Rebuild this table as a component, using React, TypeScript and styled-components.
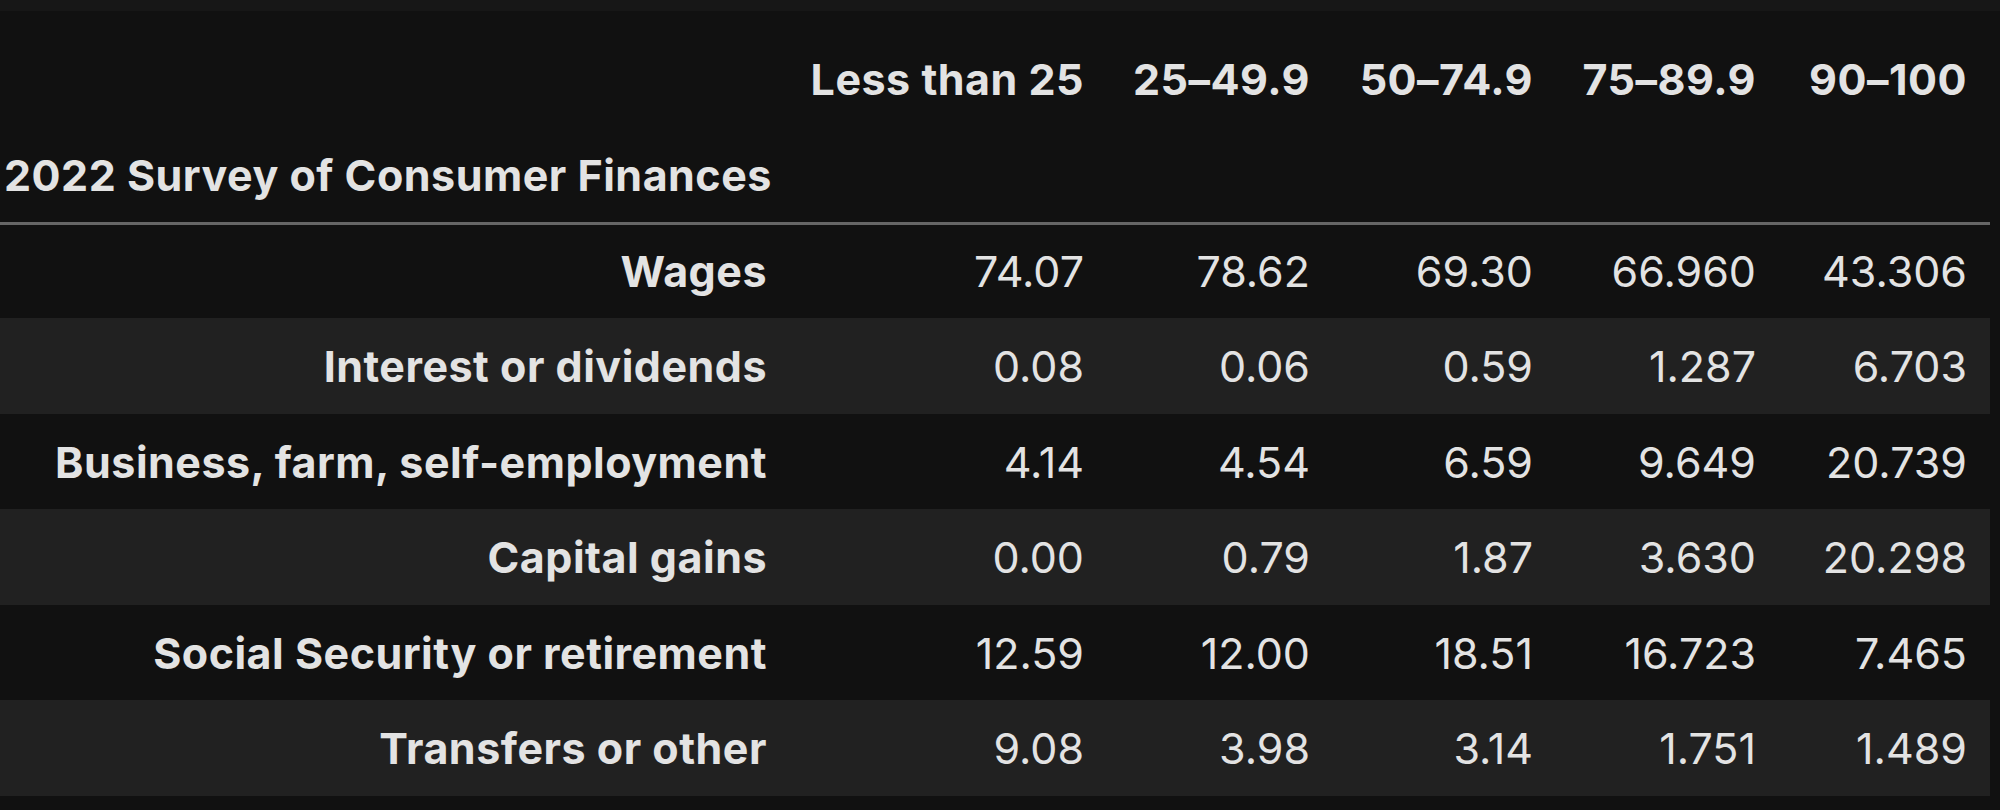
import styled, { createGlobalStyle } from 'styled-components'

interface Row {
    label: string;
    values: string[];
}

const GlobalStyle = createGlobalStyle`
    html, body {
        margin: 0;
        padding: 0;
        background: #111111;
    }
    body {
        font-family: Inter, 'Noto Sans', 'Liberation Sans', sans-serif;
        color: #e3e3e3;
    }
`

const Page = styled.div`
    width: 2000px;
    height: 810px;
    background: #111111;
    border-top: 11px solid #171717;
    box-sizing: border-box;
    padding-top: 19px;
    overflow: hidden;
`

const Table = styled.table`
    width: 1990px;
    table-layout: fixed;
    border-collapse: collapse;
    border-spacing: 0;
    font-size: 43px;
`

const HeadRow = styled.tr<{ underline?: boolean }>`
    height: ${(props) => (props.underline ? '95px' : '98px')};
    background: #111111;
    border-bottom: ${(props) => (props.underline ? '3px solid #666666' : 'none')};
`

const Th = styled.th<{ align?: string }>`
    font-weight: 700;
    letter-spacing: 0.5px;
    text-align: ${(props) => props.align || 'right'};
    padding: 0 23px 0 ${(props) => (props.align === 'left' ? '4px' : '0')};
    white-space: nowrap;
    vertical-align: middle;
    color: #e3e3e3;
`

const BodyRow = styled.tr<{ striped: boolean }>`
    height: ${(props) => (props.striped ? '96px' : '95px')};
    background: ${(props) => (props.striped ? '#212121' : '#111111')};
`

const Td = styled.td`
    font-weight: 400;
    text-align: right;
    padding: 0 23px 0 0;
    white-space: nowrap;
    vertical-align: middle;
    color: #e3e3e3;
`

const columns = ['Less than 25', '25–49.9', '50–74.9', '75–89.9', '90–100']
const widths = [790, 317, 226, 223, 223, 211]

const rows: Row[] = [
    { label: 'Wages', values: ['74.07', '78.62', '69.30', '66.960', '43.306'] },
    { label: 'Interest or dividends', values: ['0.08', '0.06', '0.59', '1.287', '6.703'] },
    { label: 'Business, farm, self-employment', values: ['4.14', '4.54', '6.59', '9.649', '20.739'] },
    { label: 'Capital gains', values: ['0.00', '0.79', '1.87', '3.630', '20.298'] },
    { label: 'Social Security or retirement', values: ['12.59', '12.00', '18.51', '16.723', '7.465'] },
    { label: 'Transfers or other', values: ['9.08', '3.98', '3.14', '1.751', '1.489'] },
]

const App: React.FC = () => {
    return (
        <Page>
            <GlobalStyle />
            <Table>
                <colgroup>
                    {widths.map((w, i) => <col key={i} style={{ width: w }} />)}
                </colgroup>
                <thead>
                    <HeadRow>
                        <Th></Th>
                        {columns.map((c) => <Th key={c}>{c}</Th>)}
                    </HeadRow>
                    <HeadRow underline>
                        <Th align="left">2022 Survey of Consumer Finances</Th>
                        {columns.map((c) => <Th key={c}></Th>)}
                    </HeadRow>
                </thead>
                <tbody>
                    {rows.map((row, i) =>
                        <BodyRow key={row.label} striped={i % 2 === 1}>
                            <Th>{row.label}</Th>
                            {row.values.map((v, j) => <Td key={j}>{v}</Td>)}
                        </BodyRow>
                    )}
                </tbody>
            </Table>
        </Page>
    )
}

export default App;
